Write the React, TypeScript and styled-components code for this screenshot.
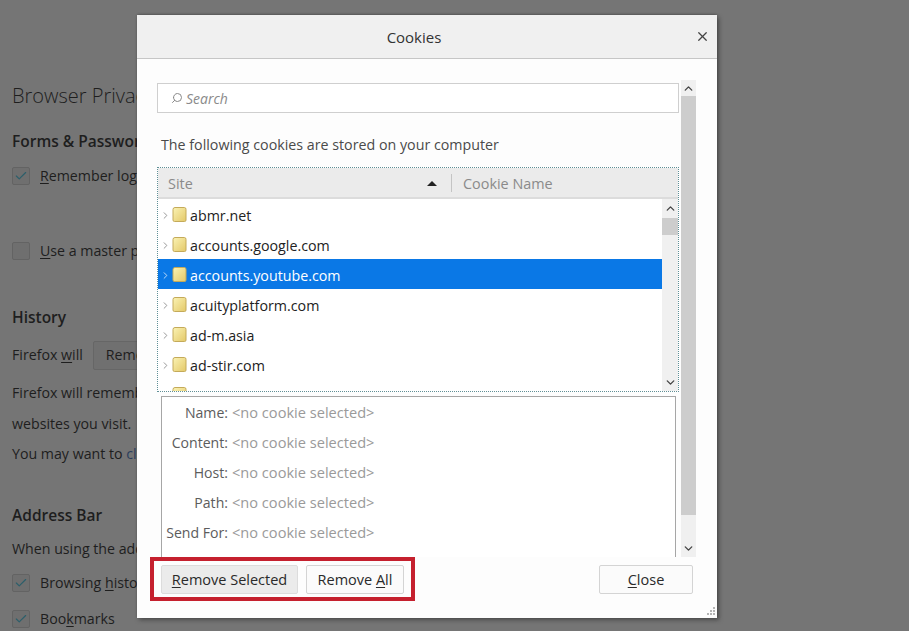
import React from "react";
import styled, { createGlobalStyle } from "styled-components";
import { Check, X, ChevronRight, ChevronUp, ChevronDown, Search as SearchIcon } from "lucide-react";

const Global = createGlobalStyle`
  html, body { margin: 0; padding: 0; height: 100%; }
  body { background: #757575; overflow: hidden; font-family: "Open Sans", "Liberation Sans", sans-serif; }
  u { text-underline-offset: 2px; text-decoration-thickness: 1px; }
`;

const Page = styled.div`
  position: relative;
  width: 909px;
  height: 631px;
  overflow: hidden;
  background: #757575;
`;

const Prefs = styled.div`
  display: flex;
  flex-direction: column;
  width: 137px;
  height: 631px;
  box-sizing: border-box;
  overflow: hidden;
  padding: 82px 0 0 12px;
  color: #1e1e1e;
  font-size: 14.2px;
  white-space: nowrap;
`;

const PageTitle = styled.div`
  font-size: 20px;
  font-weight: 300;
  line-height: 27px;
`;

const Heading = styled.div<{ $top: number }>`
  margin-top: ${(p) => p.$top}px;
  font-size: 15.5px;
  font-weight: 600;
  line-height: 22px;
`;

const PrefLine = styled.div<{ $top: number }>`
  display: flex;
  align-items: center;
  gap: 10px;
  height: 22px;
  margin-top: ${(p) => p.$top}px;
  line-height: 22px;
`;

const Checkbox = styled.span`
  flex: none;
  display: flex;
  align-items: center;
  justify-content: center;
  width: 18px;
  height: 18px;
  box-sizing: border-box;
  border: 1px solid #636363;
  border-radius: 2px;
  background: #6f6f6f;
  color: #2c5f6b;
`;

const PrefSelect = styled.span`
  display: flex;
  align-items: center;
  height: 29px;
  padding: 0 12px;
  box-sizing: border-box;
  border: 1px solid #666;
  border-radius: 2px;
  background: #707070;
`;

const PrefLink = styled.span`
  color: #2a3c5c;
`;

const Dialog = styled.div`
  position: absolute;
  left: 137px;
  top: 15px;
  width: 580px;
  height: 603px;
  display: flex;
  flex-direction: column;
  background: #fdfdfd;
  box-shadow: 2px 2px 4px rgba(40, 40, 40, 0.55), 0 -1px 2px rgba(40, 40, 40, 0.3);
  border-radius: 2px 2px 0 0;
  color: #2b2b2b;
  font-size: 14.4px;
`;

const TitleBar = styled.div`
  position: relative;
  flex: none;
  height: 44px;
  display: flex;
  align-items: center;
  justify-content: center;
  box-sizing: border-box;
  padding-right: 26px;
  background: #f0f0f0;
  border-bottom: 1px solid #c6c6c6;
  font-size: 15px;
  font-weight: 500;
  color: #333;
`;

const CloseX = styled.span`
  position: absolute;
  right: 7px;
  top: 14px;
  display: flex;
  color: #444;
`;

const Body = styled.div`
  flex: 1;
  min-height: 0;
  display: flex;
  padding: 21px 21px 0 20px;
  gap: 2px;
`;

const MainColumn = styled.div`
  width: 522px;
  display: flex;
  flex-direction: column;
`;

const SearchBox = styled.div`
  margin-top: 3px;
  flex: none;
  height: 30px;
  display: flex;
  align-items: center;
  gap: 3px;
  padding-left: 13px;
  box-sizing: border-box;
  border: 1px solid #cfcfcf;
  background: #fff;
  color: #8a8a8a;
  font-style: italic;
  font-size: 14px;
`;

const Intro = styled.div`
  margin: 21px 0 0 4px;
  height: 22px;
  line-height: 22px;
  color: #4a4a4a;
  font-size: 14.25px;
  white-space: nowrap;
`;

const Tree = styled.div`
  margin-top: 11px;
  height: 225px;
  flex: none;
  display: flex;
  flex-direction: column;
  box-sizing: border-box;
  border: 1px dotted #5f8f96;
  background: #fff;
`;

const TreeHead = styled.div`
  flex: none;
  height: 31px;
  display: flex;
  align-items: center;
  box-sizing: border-box;
  padding-top: 1px;
  background: #ebebeb;
  border-bottom: 2px solid #dcdcdc;
  color: #8a8a8a;
`;

const SiteColumn = styled.div`
  width: 294px;
  height: 18px;
  display: flex;
  align-items: center;
  justify-content: space-between;
  padding: 0 14px 0 10px;
  box-sizing: border-box;
  border-right: 1px solid #c4c4c4;
`;

const SortArrow = styled.span`
  width: 0;
  height: 0;
  border-left: 5px solid transparent;
  border-right: 5px solid transparent;
  border-bottom: 5px solid #222;
`;

const NameColumn = styled.div`
  padding-left: 11px;
`;

const TreeBody = styled.div`
  flex: 1;
  min-height: 0;
  display: flex;
`;

const RowList = styled.div`
  flex: 1;
  min-width: 0;
  overflow: hidden;
`;

const Row = styled.div<{ $selected?: boolean }>`
  height: 30px;
  display: flex;
  align-items: center;
  box-sizing: border-box;
  padding: 2px 0 0 2px;
  background: ${(p) => (p.$selected ? "#0a78e6" : "transparent")};
  color: ${(p) => (p.$selected ? "#fff" : "#222")};
  font-size: 14.25px;
`;

const Twisty = styled.span<{ $selected?: boolean }>`
  display: flex;
  width: 12px;
  color: ${(p) => (p.$selected ? "#cfe4fa" : "#8f8f8f")};
`;

const FolderSvg = styled.svg`
  flex: none;
  margin: -2px 3px 0 0;
`;

const Scroll = styled.div<{ $width: number }>`
  flex: none;
  width: ${(p) => p.$width}px;
  display: flex;
  flex-direction: column;
  background: #f0f0f0;
  color: #444;
`;

const ScrollButton = styled.div<{ $height: number }>`
  flex: none;
  height: ${(p) => p.$height}px;
  display: flex;
  align-items: center;
  justify-content: center;
`;

const ScrollThumb = styled.div<{ $height: number }>`
  flex: none;
  height: ${(p) => p.$height}px;
  background: #cdcdcd;
`;

const ScrollRest = styled.div`
  flex: 1;
`;

const Details = styled.div`
  margin: 4px 3px 0 4px;
  flex: 1;
  min-height: 0;
  box-sizing: border-box;
  border: 1px solid #a6a6a6;
  border-bottom: none;
  background: #fff;
`;

const DetailRow = styled.div`
  height: 30px;
  display: flex;
  align-items: center;
`;

const DetailLabel = styled.span`
  width: 66px;
  text-align: right;
  margin-right: 4px;
  color: #5c5c5c;
  font-size: 14.1px;
  white-space: nowrap;
`;

const DetailValue = styled.span`
  color: #9a9a9a;
  font-size: 14.6px;
`;

const Footer = styled.div`
  position: relative;
  flex: none;
  height: 61px;
  display: flex;
  align-items: flex-start;
  justify-content: space-between;
  padding: 0 24px 0 13px;
`;

const Highlight = styled.div`
  display: flex;
  gap: 8px;
  padding: 4px 7px 3px 7px;
  border: 4px solid #c5202e;
`;

const Button = styled.div<{ $width: number; $pressed?: boolean }>`
  width: ${(p) => p.$width}px;
  height: 29px;
  display: flex;
  align-items: center;
  justify-content: center;
  box-sizing: border-box;
  border: 1px solid ${(p) => (p.$pressed ? "#dcdcdc" : "#d4d4d4")};
  border-radius: 2px;
  background: ${(p) => (p.$pressed ? "#ebebeb" : "#fbfbfb")};
  color: #2a2a2a;
  font-size: 14.5px;
`;

const CloseButton = styled(Button)`
  margin-top: 8px;
`;

const Grip = styled.svg`
  position: absolute;
  right: 2px;
  bottom: 2px;
`;

const sites = ["abmr.net", "accounts.google.com", "accounts.youtube.com", "acuityplatform.com", "ad-m.asia", "ad-stir.com", ""];
const fields = ["Name:", "Content:", "Host:", "Path:", "Send For:"];

const Folder = () => (
  <FolderSvg width="15" height="17" viewBox="0 0 15 17">
    <defs>
      <linearGradient id="fold" x1="0" y1="0" x2="1" y2="1">
        <stop offset="0" stopColor="#fbf3b4" />
        <stop offset="1" stopColor="#e3c868" />
      </linearGradient>
    </defs>
    <path d="M1 3.5 Q1 1.5 3 1.5 H12.5 Q14 1.5 14 3.5 V14 Q14 15.5 12.5 15.5 H2.5 Q1 15.5 1 14 Z" fill="url(#fold)" stroke="#c4aa5a" strokeWidth="1" />
  </FolderSvg>
);

const Scrollbar = ({ width, top, bottom, thumb }: { width: number; top: number; bottom: number; thumb: number }) => (
  <Scroll $width={width}>
    <ScrollButton $height={top}><ChevronUp size={13} strokeWidth={2.5} /></ScrollButton>
    <ScrollThumb $height={thumb} />
    <ScrollRest />
    <ScrollButton $height={bottom}><ChevronDown size={13} strokeWidth={2.5} /></ScrollButton>
  </Scroll>
);

export default function App() {
  return (
    <Page>
      <Global />
      <Prefs>
        <PageTitle>Browser Privacy</PageTitle>
        <Heading $top={21}>Forms &amp; Passwords</Heading>
        <PrefLine $top={13}>
          <Checkbox><Check size={14} strokeWidth={2} /></Checkbox>
          <span><u>R</u>emember logins and passwords</span>
        </PrefLine>
        <PrefLine $top={53}>
          <Checkbox />
          <span><u>U</u>se a master password</span>
        </PrefLine>
        <Heading $top={44}>History</Heading>
        <PrefLine $top={16}>
          <span>Firefox <u>w</u>ill</span>
          <PrefSelect>Remember history</PrefSelect>
        </PrefLine>
        <PrefLine $top={16}>Firefox will remember your browsing</PrefLine>
        <PrefLine $top={9}>websites you visit.</PrefLine>
        <PrefLine $top={8}>
          <span>You may want to <PrefLink>clear your recent history</PrefLink></span>
        </PrefLine>
        <Heading $top={39}>Address Bar</Heading>
        <PrefLine $top={12}>When using the address bar, suggest</PrefLine>
        <PrefLine $top={12}>
          <Checkbox><Check size={14} strokeWidth={2} /></Checkbox>
          <span>Browsing <u>h</u>istory</span>
        </PrefLine>
        <PrefLine $top={14}>
          <Checkbox><Check size={14} strokeWidth={2} /></Checkbox>
          <span>Boo<u>k</u>marks</span>
        </PrefLine>
      </Prefs>

      <Dialog>
        <TitleBar>
          Cookies
          <CloseX><X size={15} strokeWidth={2} /></CloseX>
        </TitleBar>
        <Body>
          <MainColumn>
            <SearchBox>
              <SearchIcon size={12} style={{ transform: "scaleX(-1)" }} />
              Search
            </SearchBox>
            <Intro>The following cookies are stored on your computer</Intro>
            <Tree>
              <TreeHead>
                <SiteColumn>Site<SortArrow /></SiteColumn>
                <NameColumn>Cookie Name</NameColumn>
              </TreeHead>
              <TreeBody>
                <RowList>
                  {sites.map((s, i) => (
                    <Row key={i} $selected={i === 2}>
                      <Twisty $selected={i === 2}>{s ? <ChevronRight size={11} strokeWidth={2} /> : null}</Twisty>
                      <Folder />
                      {s}
                    </Row>
                  ))}
                </RowList>
                <Scrollbar width={16} top={19} bottom={17} thumb={17} />
              </TreeBody>
            </Tree>
            <Details>
              {fields.map((f) => (
                <DetailRow key={f}>
                  <DetailLabel>{f}</DetailLabel>
                  <DetailValue>&lt;no cookie selected&gt;</DetailValue>
                </DetailRow>
              ))}
            </Details>
          </MainColumn>
          <Scrollbar width={15} top={16} bottom={17} thumb={419} />
        </Body>
        <Footer>
          <Highlight>
            <Button $width={137} $pressed><span><u>R</u>emove Selected</span></Button>
            <Button $width={98}><span>Remove <u>A</u>ll</span></Button>
          </Highlight>
          <CloseButton $width={94}><span><u>C</u>lose</span></CloseButton>
          <Grip width="10" height="9" viewBox="0 0 10 9" fill="#b5b5b5">
            <rect x="8" y="0" width="2" height="2" />
            <rect x="5" y="3" width="2" height="2" />
            <rect x="8" y="3" width="2" height="2" />
            <rect x="2" y="6" width="2" height="2" />
            <rect x="5" y="6" width="2" height="2" />
            <rect x="8" y="6" width="2" height="2" />
          </Grip>
        </Footer>
      </Dialog>
    </Page>
  );
}
